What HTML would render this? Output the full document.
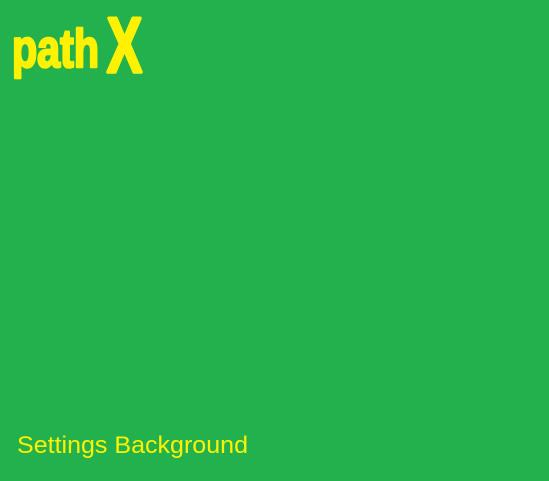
<!DOCTYPE html>
<html><head><style>
html,body{margin:0;padding:0;}
body{width:549px;height:481px;background:#22b14c;overflow:hidden;}
</style></head><body>
<svg width="549" height="481" style="position:absolute;left:0;top:0">
<text x="12" y="67" font-family="Liberation Sans Narrow, Liberation Sans, sans-serif" font-weight="bold" font-size="54" fill="#fff200" stroke="#fff200" stroke-width="2.5" stroke-linejoin="round" textLength="87" lengthAdjust="spacingAndGlyphs">path</text>
<text x="107" y="72" font-family="Liberation Sans Narrow, Liberation Sans, sans-serif" font-weight="bold" font-size="78" fill="#fff200" stroke="#fff200" stroke-width="3.5" stroke-linejoin="round" textLength="35" lengthAdjust="spacingAndGlyphs">X</text>
<text x="17" y="453" font-family="Liberation Sans, sans-serif" font-size="24" fill="#fff200" textLength="231" lengthAdjust="spacingAndGlyphs">Settings Background</text>
</svg>
</body></html>
